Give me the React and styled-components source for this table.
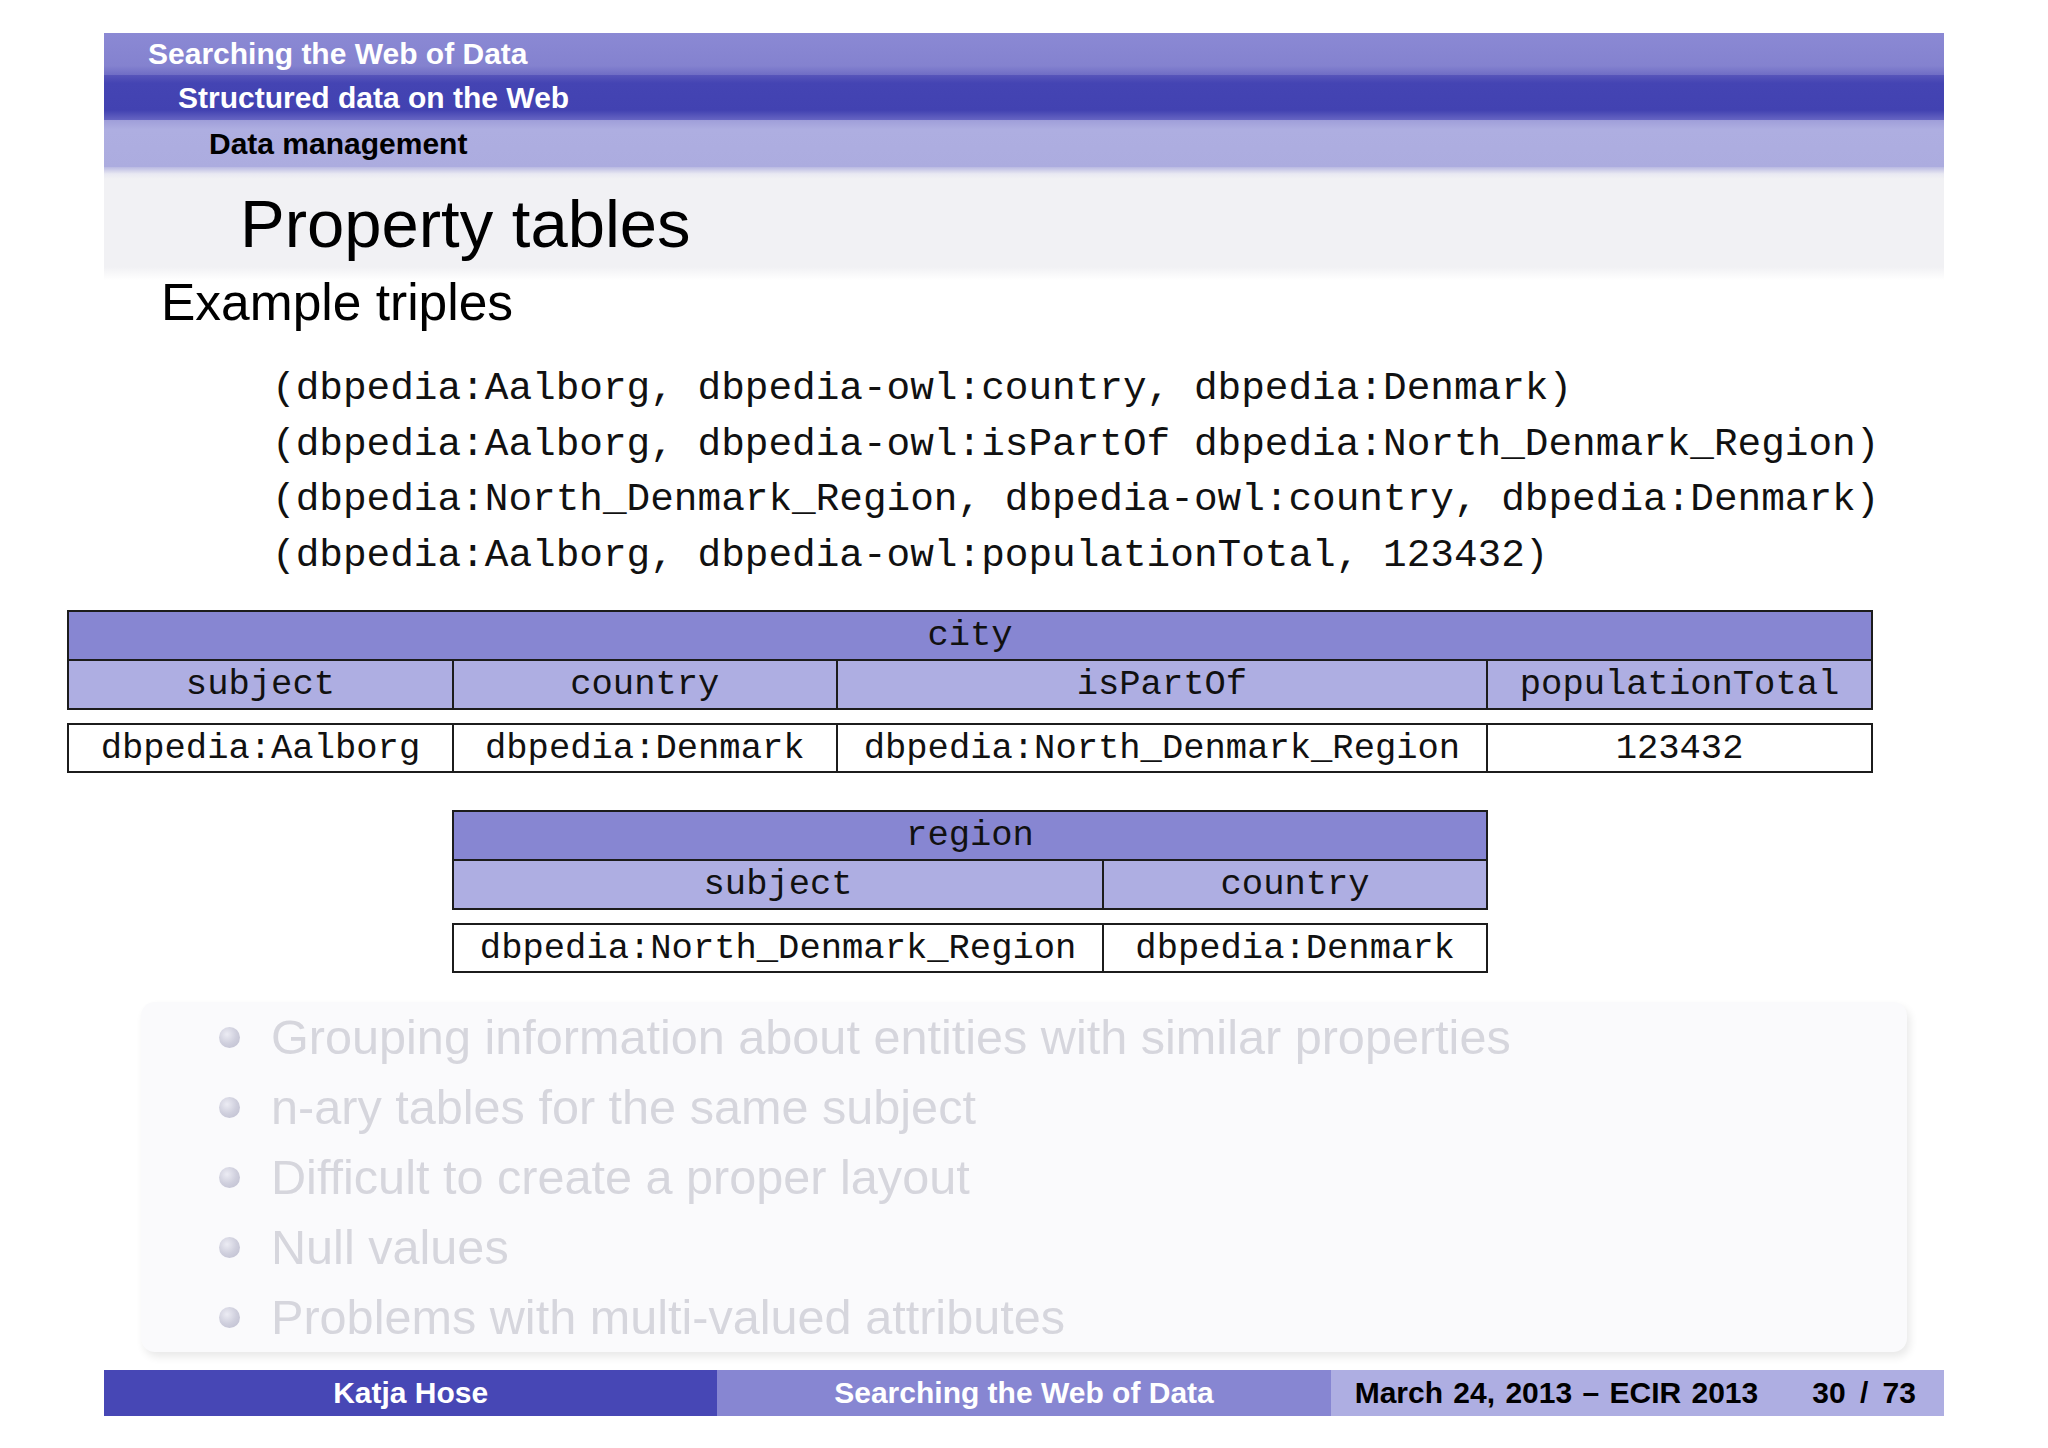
import React from 'react';
import styled, { createGlobalStyle } from 'styled-components';

const GlobalStyle = createGlobalStyle`
  html, body {
    margin: 0;
    padding: 0;
    background: #ffffff;
  }
  body {
    font-family: "Liberation Sans", Arial, sans-serif;
    color: #111;
  }
`;

const Slide = styled.div`
  width: 1840px;
  margin-left: 104px;
  padding-top: 33px;
  display: flex;
  flex-direction: column;
`;

const HeadBar = styled.div`
  height: ${p => p.$h}px;
  padding-left: ${p => p.$indent}px;
  display: flex;
  align-items: center;
  font-size: 30px;
  font-weight: 700;
  color: ${p => p.$fg};
  background: ${p => p.$bg};
`;

const TitleFrame = styled.div`
  height: 113px;
  padding-left: 136px;
  display: flex;
  align-items: center;
  background: linear-gradient(to bottom, #b9b9e2 0px, #e9e9f2 7px, #f1f1f4 12px, #f1f1f4 100px, #ffffff 113px);
`;

const Title = styled.h1`
  margin: 0;
  font-size: 67px;
  font-weight: 400;
  line-height: 1;
  color: #000;
`;

const Subtitle = styled.h2`
  margin: 0 0 0 57px;
  font-size: 51.5px;
  font-weight: 400;
  line-height: 44px;
  color: #000;
`;

const Triples = styled.div`
  margin: 37px 0 0 168px;
  font-family: "Liberation Mono", "Courier New", monospace;
  font-size: 39.4px;
  line-height: 55.5px;
  color: #111;
  white-space: pre;
`;

const TableWrap = styled.div`
  margin-top: ${p => p.$top}px;
  margin-left: ${p => p.$left}px;
  width: ${p => p.$width}px;
  display: flex;
  flex-direction: column;
  gap: 13px;
  font-family: "Liberation Mono", "Courier New", monospace;
  font-size: 35.5px;
  color: #111;
`;

const Grid = styled.div`
  display: grid;
  grid-template-columns: ${p => p.$cols};
  gap: 2px;
  padding: 2px;
  background: #1c1c1c;
`;

const Cell = styled.div`
  height: ${p => p.$h || 47}px;
  display: flex;
  align-items: center;
  justify-content: center;
  background: ${p => p.$bg};
  grid-column: ${p => (p.$span ? '1 / -1' : 'auto')};
`;

const BulletBox = styled.ul`
  list-style: none;
  margin: 29px 0 0 37px;
  padding: 0;
  width: 1766px;
  height: 350px;
  border-radius: 14px;
  background: #fafafc;
  box-shadow: 3px 5px 9px rgba(0, 0, 0, 0.09);
`;

const Item = styled.li`
  height: 70px;
  display: flex;
  align-items: center;
  font-size: 48.6px;
  color: #d6d6dd;
`;

const Ball = styled.span`
  width: 21px;
  height: 21px;
  margin: 0 31px 0 78px;
  border-radius: 50%;
  flex-shrink: 0;
  background: radial-gradient(circle at 38% 35%, #ececf4 0%, #cfcfdd 50%, #bdbdcf 100%);
`;

const Footer = styled.div`
  margin-top: 18px;
  height: 46px;
  display: grid;
  grid-template-columns: 1fr 1fr 1fr;
  font-size: 30px;
  font-weight: 700;
`;

const FootCell = styled.div`
  display: flex;
  align-items: center;
  justify-content: ${p => p.$justify || 'center'};
  padding: ${p => p.$pad || '0'};
  background: ${p => p.$bg};
  color: ${p => p.$fg};
`;

const FootText = styled.span`
  word-spacing: ${p => p.$spacing || 0}px;
`;

const triples = [
  '(dbpedia:Aalborg, dbpedia-owl:country, dbpedia:Denmark)',
  '(dbpedia:Aalborg, dbpedia-owl:isPartOf dbpedia:North_Denmark_Region)',
  '(dbpedia:North_Denmark_Region, dbpedia-owl:country, dbpedia:Denmark)',
  '(dbpedia:Aalborg, dbpedia-owl:populationTotal, 123432)',
];

const bullets = [
  'Grouping information about entities with similar properties',
  'n-ary tables for the same subject',
  'Difficult to create a proper layout',
  'Null values',
  'Problems with multi-valued attributes',
];

function PropTable({ name, widths, columns, row, top, left }) {
  const cols = widths.map(w => `${w}fr`).join(' ');
  const total = widths.reduce((a, b) => a + b, 0);
  return (
    <TableWrap $top={top} $left={left} $width={total}>
      <Grid $cols={cols}>
        <Cell $span $bg="#8786d2">{name}</Cell>
        {columns.map(c => (
          <Cell key={c} $bg="#aeaee2">{c}</Cell>
        ))}
      </Grid>
      <Grid $cols={cols}>
        {row.map(v => (
          <Cell key={v} $h={46} $bg="#ffffff">{v}</Cell>
        ))}
      </Grid>
    </TableWrap>
  );
}

export default function App() {
  return (
    <>
      <GlobalStyle />
      <Slide>
        <HeadBar
          $h={42}
          $indent={44}
          $fg="#fff"
          $bg="linear-gradient(to bottom, #8b89d4 0%, #8482cf 78%, #6f6dc5 100%)"
        >
          Searching the Web of Data
        </HeadBar>
        <HeadBar
          $h={45}
          $indent={74}
          $fg="#fff"
          $bg="linear-gradient(to bottom, #5755ba 0%, #4444b3 18%, #4242b1 78%, #6665c2 100%)"
        >
          Structured data on the Web
        </HeadBar>
        <HeadBar
          $h={47}
          $indent={105}
          $fg="#000"
          $bg="linear-gradient(to bottom, #9f9ed9 0%, #aeaee1 20%, #acacdf 100%)"
        >
          Data management
        </HeadBar>

        <TitleFrame>
          <Title>Property tables</Title>
        </TitleFrame>

        <Subtitle>Example triples</Subtitle>

        <Triples>
          {triples.map(t => (
            <div key={t}>{t}</div>
          ))}
        </Triples>

        <PropTable
          name="city"
          widths={[385, 384, 652, 385]}
          columns={['subject', 'country', 'isPartOf', 'populationTotal']}
          row={['dbpedia:Aalborg', 'dbpedia:Denmark', 'dbpedia:North_Denmark_Region', '123432']}
          top={27}
          left={-37}
        />

        <PropTable
          name="region"
          widths={[652, 384]}
          columns={['subject', 'country']}
          row={['dbpedia:North_Denmark_Region', 'dbpedia:Denmark']}
          top={37}
          left={348}
        />

        <BulletBox>
          {bullets.map(b => (
            <Item key={b}>
              <Ball />
              {b}
            </Item>
          ))}
        </BulletBox>

        <Footer>
          <FootCell $bg="#4747b5" $fg="#fff">Katja Hose</FootCell>
          <FootCell $bg="#8786d2" $fg="#fff">Searching the Web of Data</FootCell>
          <FootCell $bg="#aeaee2" $fg="#000" $justify="space-between" $pad="0 28px 0 24px">
            <FootText $spacing={2}>March 24, 2013 – ECIR 2013</FootText>
            <FootText $spacing={6}>30 / 73</FootText>
          </FootCell>
        </Footer>
      </Slide>
    </>
  );
}
